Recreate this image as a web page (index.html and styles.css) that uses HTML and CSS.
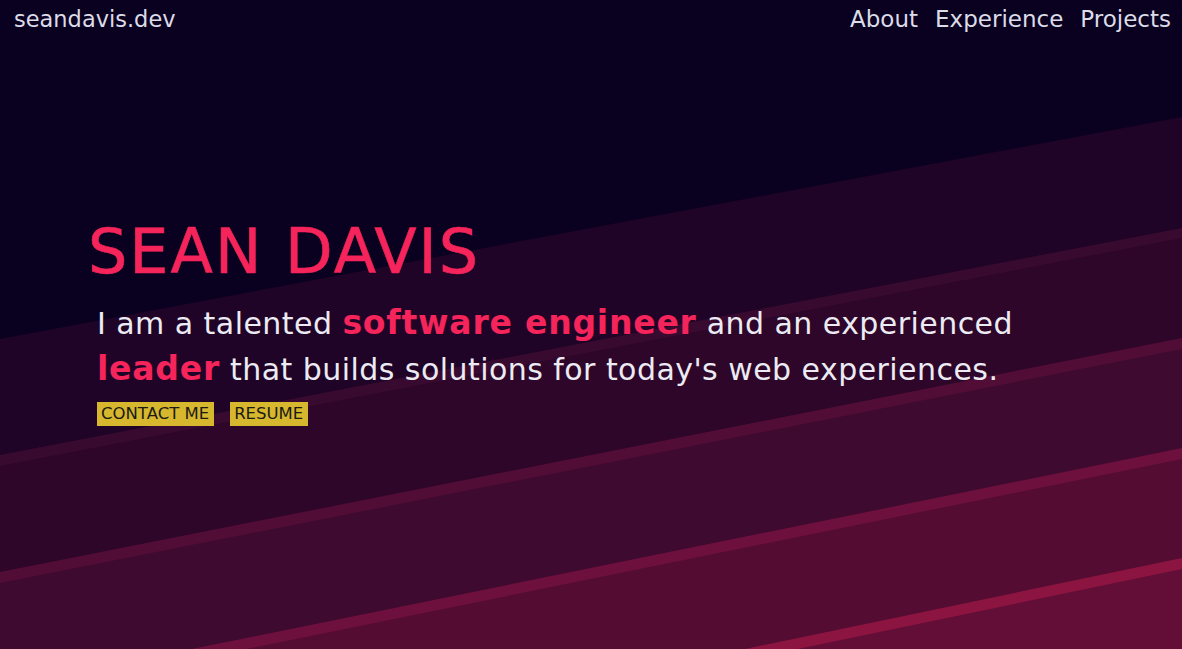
FILE: index.html
```html
<!DOCTYPE html>
<html lang="en">
<head>
<meta charset="utf-8">
<title>seandavis.dev</title>
<link rel="stylesheet" href="styles.css">
</head>
<body>
<div class="page">
  <svg class="backdrop" viewBox="0 0 1182 649" preserveAspectRatio="none" aria-hidden="true">
    <rect width="1182" height="649" fill="#0a0120"/>
    <polygon points="0,339 1182,117 1182,649 0,649" fill="#1f0427"/>
    <polygon points="0,455 1182,228 1182,649 0,649" fill="#380a30"/>
    <polygon points="0,466 1182,238 1182,649 0,649" fill="#2d0629"/>
    <polygon points="0,572 1182,338 1182,649 0,649" fill="#520d37"/>
    <polygon points="0,583 1182,349 1182,649 0,649" fill="#3f0a2f"/>
    <polygon points="0,688 1182,448 1182,649 0,649" fill="#6d103d"/>
    <polygon points="0,699 1182,459 1182,649 0,649" fill="#540c32"/>
    <polygon points="0,804 1182,558 1182,649 0,649" fill="#8c1441"/>
    <polygon points="0,815 1182,569 1182,649 0,649" fill="#630e37"/>
  </svg>
  <header class="topbar">
    <a class="logo" href="#">seandavis.dev</a>
    <nav class="nav">
      <a href="#about">About</a>
      <a href="#experience">Experience</a>
      <a href="#projects">Projects</a>
    </nav>
  </header>
  <main class="hero">
    <h1 class="name">SEAN DAVIS</h1>
    <p class="tagline">I am a talented <strong>software engineer</strong> and an experienced<br><strong>leader</strong> that builds solutions for today's web experiences.</p>
    <div class="actions">
      <a class="btn" href="#contact">CONTACT ME</a>
      <a class="btn" href="#resume">RESUME</a>
    </div>
  </main>
</div>
</body>
</html>
```

FILE: styles.css
```css
* { box-sizing: border-box; }
html, body { margin: 0; padding: 0; }
body {
  font-family: "DejaVu Sans", "Liberation Sans", sans-serif;
  background: #0a0120;
  color: #ecebf3;
}
.page {
  position: relative;
  width: 1182px;
  height: 649px;
  overflow: hidden;
}
.backdrop {
  position: absolute;
  left: 0;
  top: 0;
  width: 100%;
  height: 100%;
  z-index: 0;
}
.topbar {
  position: relative;
  z-index: 1;
  display: flex;
  justify-content: space-between;
  align-items: center;
  padding: 1px 11px 0 14px;
  height: 36px;
}
.logo, .nav a {
  color: #dcdbe8;
  text-decoration: none;
  font-size: 23px;
}
.logo {
  font-size: 22.5px;
}
.nav {
  display: flex;
  gap: 17px;
}
.hero {
  position: relative;
  z-index: 1;
  padding: 180px 0 0 88px;
}
.name {
  margin: 0;
  font-size: 62px;
  font-weight: normal;
  line-height: 72px;
  color: #f5245b;
  letter-spacing: 2px;
  -webkit-text-stroke: 0.6px #f5245b;
}
.tagline {
  margin: 13px 0 0 9px;
  font-size: 30px;
  line-height: 46px;
  color: #ecebf3;
  letter-spacing: 0.45px;
}
.tagline strong {
  color: #f5245b;
  font-weight: bold;
  font-size: 33px;
  line-height: 30px;
  letter-spacing: 0.8px;
}
.actions {
  display: flex;
  gap: 16px;
  margin: 9px 0 0 9px;
}
.btn {
  display: inline-block;
  background: #d6b72e;
  color: #1c1a14;
  text-decoration: none;
  font-size: 16.5px;
  line-height: 24px;
  padding: 0 5px 0 4px;
}
```
